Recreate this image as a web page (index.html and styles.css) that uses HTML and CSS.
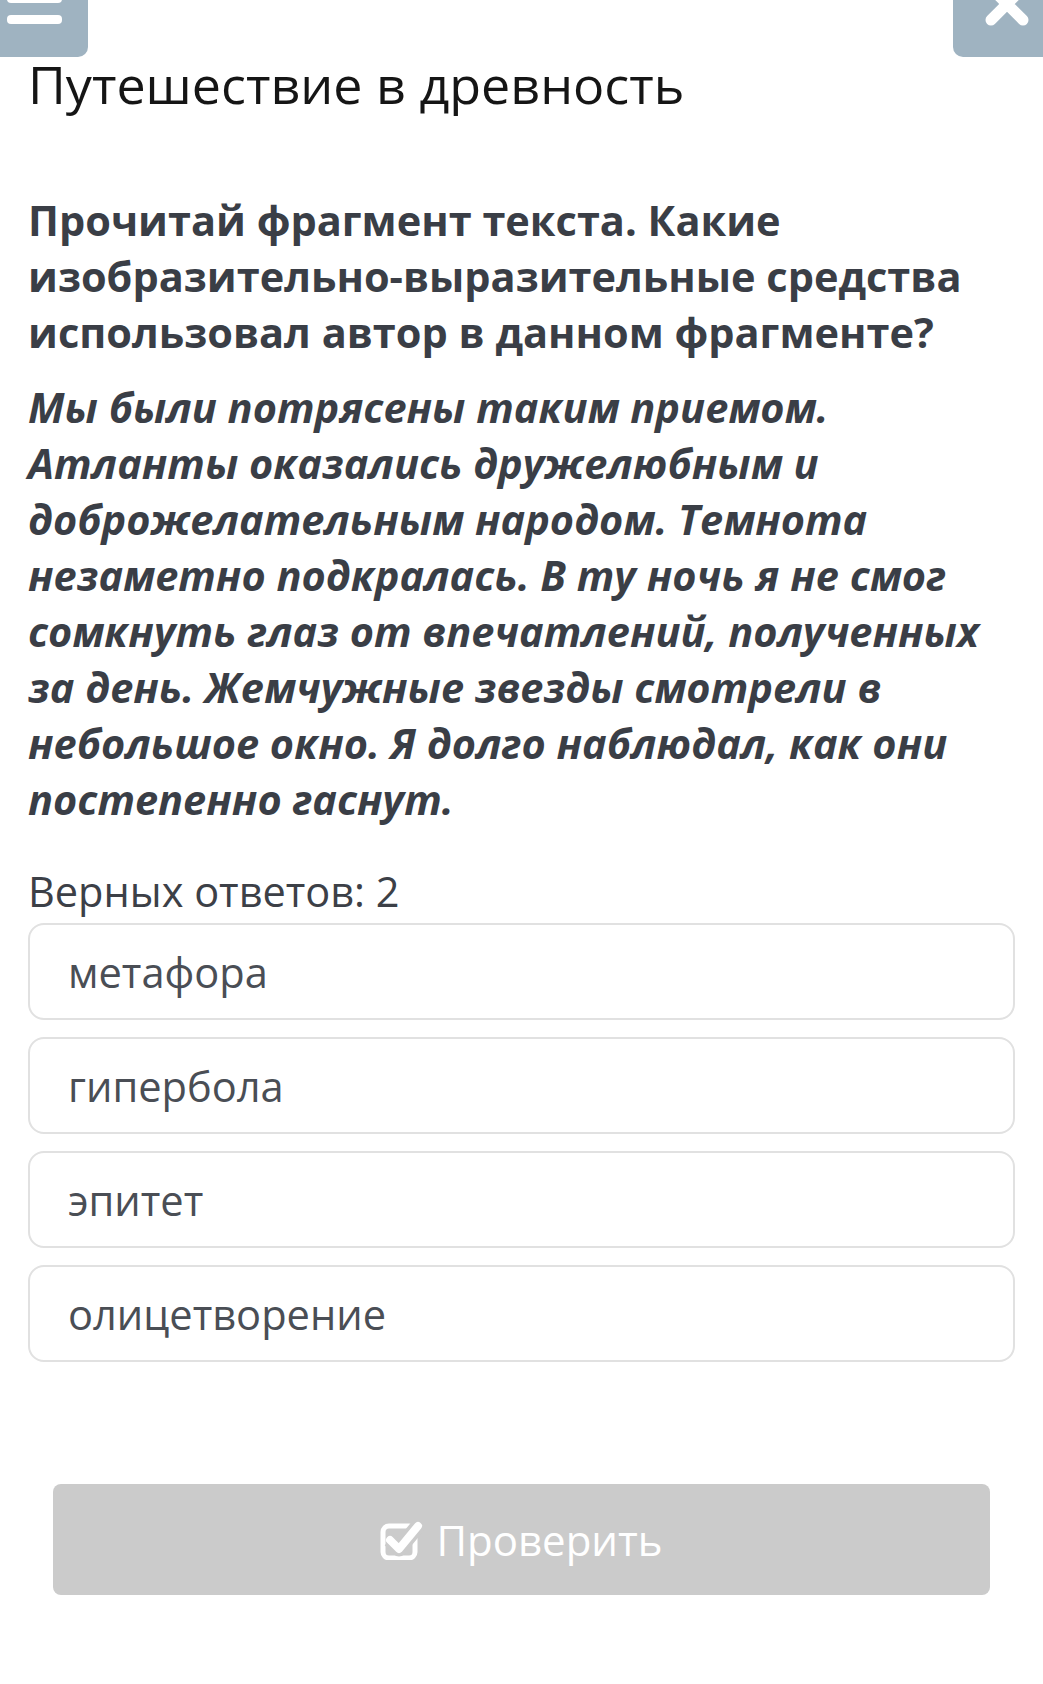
FILE: index.html
```html
<!DOCTYPE html>
<html>
<head>
  <meta charset="UTF-8">
  <link rel="stylesheet" href="styles.css">
</head>
<body>
  <!-- Верхняя панель -->
  <div class="topbar">
    <div class="tb-btn tb-menu">
      <svg width="88" height="57" viewBox="0 0 88 57">
        <rect x="7" y="-6" width="55" height="9" rx="4" fill="#fff"/>
        <rect x="7" y="15" width="55" height="9" rx="4" fill="#fff"/>
      </svg>
    </div>
    <div class="tb-btn tb-close">
      <svg width="90" height="57" viewBox="0 0 90 57">
        <path d="M38 -12 L70 20 M70 -12 L38 20" stroke="#fff" stroke-width="11" stroke-linecap="round"/>
      </svg>
    </div>
  </div>

  <div class="quiz">
    <h1 class="quiz-title">Путешествие в древность</h1>

    <!-- Вопрос -->
    <p class="q-text">Прочитай фрагмент текста. Какие изобразительно-выразительные средства использовал автор в данном фрагменте?</p>
    <p class="q-fragment">Мы были потрясены таким приемом. Атланты оказались дружелюбным и доброжелательным народом. Темнота незаметно подкралась. В ту ночь я не смог сомкнуть глаз от впечатлений, полученных за день. Жемчужные звезды смотрели в небольшое окно. Я долго наблюдал, как они постепенно гаснут.</p>

    <!-- Варианты ответа -->
    <div class="answers-label">Верных ответов: 2</div>
    <div class="answers">
      <div class="answer">метафора</div>
      <div class="answer">гипербола</div>
      <div class="answer">эпитет</div>
      <div class="answer">олицетворение</div>
    </div>

    <button class="check-btn">
      <svg width="44" height="40" viewBox="0 0 44 40">
        <rect x="3" y="6" width="32" height="32" rx="6" fill="none" stroke="#fff" stroke-width="5"/>
        <path d="M10 20 L19 29 L38 6" fill="none" stroke="#cbcbcb" stroke-width="15" stroke-linejoin="round"/>
        <path d="M10 20 L19 29 L38 6" fill="none" stroke="#fff" stroke-width="8" stroke-linecap="round" stroke-linejoin="round"/>
      </svg>
      Проверить
    </button>
  </div>
</body>
</html>
```

FILE: styles.css
```css
body {
  margin: 0;
  background-color: #fff;
  font-family: "Open Sans", "Noto Sans", sans-serif;
}
/* Верхняя панель */
.topbar {
  display: flex;
  justify-content: space-between;
  height: 50px;
}
.tb-btn {
  height: 57px;
  background-color: #9fb3c1;
  flex-shrink: 0;
}
.tb-btn svg {
  display: block;
}
.tb-menu {
  width: 88px;
  border-radius: 0 0 10px 0;
}
.tb-close {
  width: 90px;
  border-radius: 0 0 0 10px;
}
.quiz {
  padding: 0 28px 0 28px;
}
.quiz-title {
  margin: 4px 0 0 0;
  font-size: 52px;
  line-height: 60px;
  font-weight: 400;
  color: #151515;
}
.q-text {
  margin: 78px 0 0 0;
  font-size: 41.5px;
  line-height: 56px;
  font-weight: 700;
  color: #3a3e46;
}
.q-fragment {
  margin: 19px 0 0 0;
  font-size: 41.5px;
  line-height: 56px;
  font-weight: 700;
  font-style: italic;
  color: #3a3e46;
}
.answers-label {
  margin-top: 36px;
  font-size: 41.5px;
  color: #3c4047;
}
.answers {
  display: flex;
  flex-direction: column;
  gap: 17px;
  margin-top: 4px;
}
.answer {
  display: flex;
  align-items: center;
  box-sizing: border-box;
  height: 97px;
  padding: 0 38px;
  border: 2px solid #e1e1e1;
  border-radius: 16px;
  font-size: 41.6px;
  color: #4a4e55;
}
.check-btn {
  display: flex;
  align-items: center;
  justify-content: center;
  gap: 12px;
  width: calc(100% - 50px);
  height: 111px;
  margin: 122px 25px 0 25px;
  border: none;
  border-radius: 8px;
  background-color: #cbcbcb;
  color: #fff;
  font-family: "Open Sans", "Noto Sans", sans-serif;
  font-size: 42px;
}
```
